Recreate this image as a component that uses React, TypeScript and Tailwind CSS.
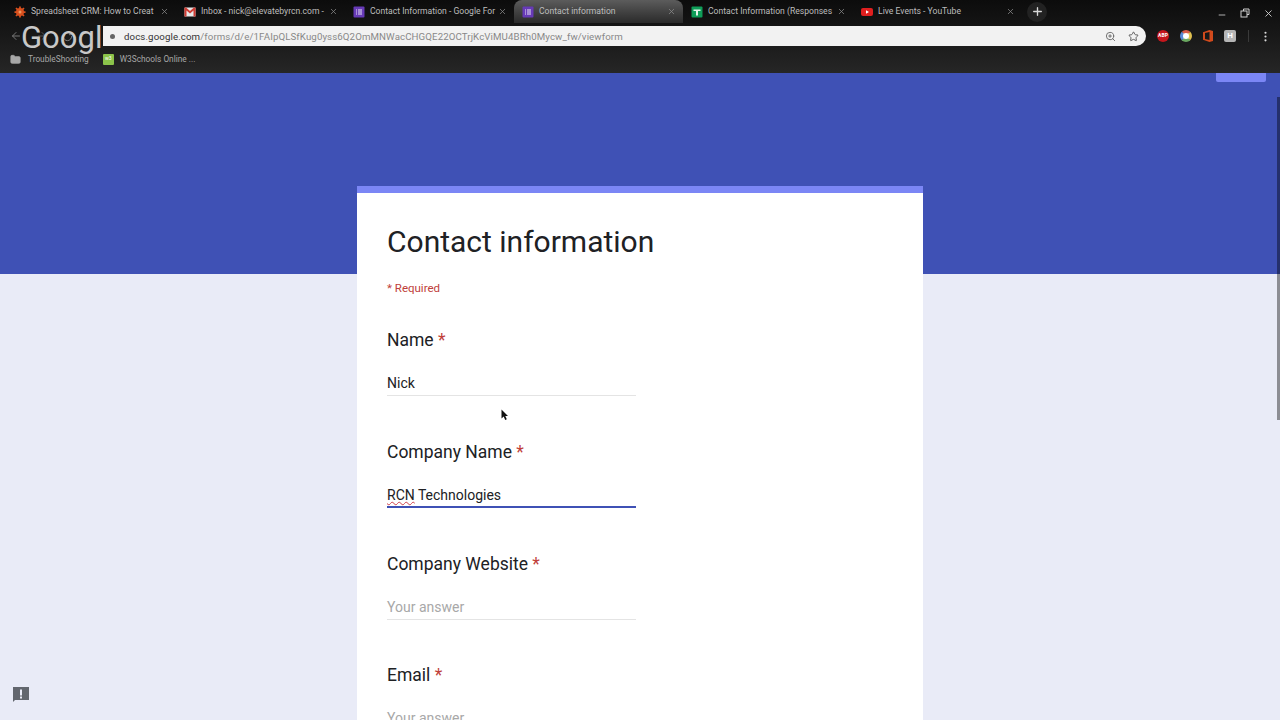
import React from 'react';
import { X, ArrowLeft, ArrowRight, RotateCw, Plus, Minus, ZoomIn, Star, EllipsisVertical, Folder } from 'lucide-react';

const roboto = { fontFamily: 'Roboto, "Liberation Sans", sans-serif' };

function Favicon({ kind }: { kind: string }) {
  if (kind === 'sun') {
    return (
      <svg width="12" height="12" viewBox="0 0 24 24" className="shrink-0">
        <circle cx="12" cy="12" r="8" fill="#d9501e" />
        <path d="M12 1v22M1 12h22M4 4l16 16M20 4L4 20" stroke="#d9501e" strokeWidth="3.5" />
        <circle cx="12" cy="12" r="3" fill="#eb9a62" />
      </svg>
    );
  }
  if (kind === 'mail') {
    return (
      <svg width="12" height="12" viewBox="0 0 24 24" className="shrink-0">
        <rect x="1" y="3" width="22" height="18" rx="1" fill="#e8e8e8" />
        <path d="M1 3v18h4V9l7 6 7-6v12h4V3h-3l-8 7-8-7z" fill="#d03b33" />
      </svg>
    );
  }
  if (kind === 'form') {
    return (
      <svg width="12" height="12" viewBox="0 0 24 24" className="shrink-0">
        <rect x="1" y="1" width="22" height="22" rx="2" fill="#673ab7" />
        <path d="M6 7h2v2H6zM10 7h8v2h-8zM6 11h2v2H6zM10 11h8v2h-8zM6 15h2v2H6zM10 15h8v2h-8z" fill="#e8e4f4" />
      </svg>
    );
  }
  if (kind === 'sheet') {
    return (
      <svg width="12" height="12" viewBox="0 0 24 24" className="shrink-0">
        <rect x="1" y="1" width="22" height="22" rx="2" fill="#0f9d58" />
        <path d="M5 7h14v3h-5v9h-4v-9H5z" fill="#e6f4ea" />
      </svg>
    );
  }
  return (
    <svg width="12" height="12" viewBox="0 0 24 24" className="shrink-0">
      <rect x="0" y="4" width="24" height="16" rx="4" fill="#e01f1f" />
      <path d="M10 8.5l6 3.5-6 3.5z" fill="#fff" />
    </svg>
  );
}

const tabs = [
  { icon: 'sun', title: 'Spreadsheet CRM: How to Creat', w: 'w-[170px]' },
  { icon: 'mail', title: 'Inbox - nick@elevatebyrcn.com -', w: 'w-[169px]' },
  { icon: 'form', title: 'Contact Information - Google For', w: 'w-[169px]' },
  { icon: 'form', title: 'Contact information', w: 'w-[169px]', active: true },
  { icon: 'sheet', title: 'Contact Information (Responses', w: 'w-[170px]' },
  { icon: 'yt', title: 'Live Events - YouTube', w: 'w-[169px]' },
];

function Tab({ icon, title, w, active }: { icon: string; title: string; w: string; active?: boolean }) {
  return (
    <div
      className={`${w} h-[23px] flex items-center pl-[8px] pr-[7px] gap-[5px] rounded-t-lg ${
        active ? 'bg-gradient-to-b from-[#5c5c5c] to-[#2b2b2b]' : ''
      }`}
    >
      <Favicon kind={icon} />
      <span className="flex-1 min-w-0 whitespace-nowrap text-[8.6px] text-[#bdbdbd]">{title}</span>
      <X className="w-[9px] h-[9px] text-[#8a8a8a] shrink-0" strokeWidth={2} />
    </div>
  );
}

function Question({ label, value, active, squiggle, mt }: { label: string; value?: string; active?: boolean; squiggle?: string; mt: string }) {
  return (
    <div className={mt}>
      <div className="text-[17.5px] leading-[19px] text-[#202124]">
        {label} <span className="text-[#c0403a]">*</span>
      </div>
      <div
        className={`mt-[23px] w-[249px] h-[23px] text-[14px] leading-[20px] ${
          active ? 'border-b-2 border-[#3f51b5]' : 'border-b border-[#e4e4e4]'
        } ${value ? 'text-[#202124]' : 'text-[#a8a8a8]'}`}
      >
        {squiggle && <span className="underline decoration-wavy decoration-[#d0404a] decoration-1">{squiggle}</span>}
        {squiggle ? ' ' : ''}
        {value ?? 'Your answer'}
      </div>
    </div>
  );
}

export default function App() {
  return (
    <div className="w-[1280px] h-[720px] overflow-hidden flex flex-col bg-[#e9ebf7]" style={roboto}>
      {/* Browser chrome */}
      <div className="h-[73px] shrink-0 flex flex-col bg-gradient-to-b from-[#0c0c0c] to-[#262626]">
        <div className="h-[23px] flex items-center pl-[6px]">
          {tabs.map((t) => (
            <Tab key={t.title} {...t} />
          ))}
          <span className="ml-[5px] w-[20px] h-[20px] rounded-full bg-[#222] flex items-center justify-center">
            <Plus className="w-[13px] h-[13px] text-[#d8d8d8]" strokeWidth={2.5} />
          </span>
          <div className="flex-1" />
          <div className="flex items-center gap-[13px] pr-[6px] pt-[3px] text-[#cfcfcf]">
            <Minus className="w-[10px] h-[10px] translate-y-[2px]" />
            <svg width="10" height="10" viewBox="0 0 10 10" fill="none" stroke="#cfcfcf" strokeWidth="1">
              <rect x="1" y="3" width="6" height="6" />
              <path d="M3.5 3V1H9v5.5H7" />
            </svg>
            <X className="w-[11px] h-[11px]" />
          </div>
        </div>
        <div className="h-[26px] flex items-center relative">
          <ArrowLeft className="w-[12px] h-[12px] text-[#777] ml-[10px]" />
          <ArrowRight className="w-[12px] h-[12px] text-[#555] ml-[14px]" />
          <RotateCw className="w-[11px] h-[11px] text-[#888] ml-[14px]" />
          {/* Google watermark lying over the toolbar */}
          <span className="absolute left-[21px] top-[-3px] text-[31px] leading-[36px] text-[#c8c8c8] w-[82px] overflow-hidden">
            Googl
          </span>
          <div className="ml-[30px] w-[1043px] h-[20px] flex items-center bg-[#f2f2f2] rounded-r-full rounded-l-lg pl-[7px] pr-[6px]">
            <span className="w-[5px] h-[5px] rounded-full bg-[#666]" />
            <span className="ml-[9px] pt-[2px] text-[9.7px] whitespace-nowrap tracking-[0.1px] text-[#888]">
              <span className="text-[#333]">docs.google.com</span>/forms/d/e/1FAIpQLSfKug0yss6Q2OmMNWacCHGQE22OCTrjKcViMU4BRh0Mycw_fw/viewform
            </span>
            <div className="flex-1" />
            <ZoomIn className="w-[11px] h-[11px] text-[#666]" />
            <Star className="w-[11px] h-[11px] text-[#555] ml-[12px] mr-[1px]" />
          </div>
          <div className="ml-[11px] flex items-center gap-[11px]">
            <span className="w-[12px] h-[12px] rounded-full bg-[#c4161c] text-white text-[5px] font-bold flex items-center justify-center">ABP</span>
            <span className="w-[12px] h-[12px] rounded-full border-[3px] border-t-[#d85c4a] border-r-[#e0c050] border-b-[#6aa860] border-l-[#5a8ad8] bg-white" />
            <svg width="10" height="12" viewBox="0 0 10 12">
              <path d="M6.5 0L0 2.2v7.6L6.5 12l3.5-1V1zM6.5 2v8L2 9V3z" fill="#d24a1c" />
            </svg>
            <span className="w-[12px] h-[12px] rounded-[2px] bg-[#b5b5b5] text-white text-[8px] font-bold flex items-center justify-center">H</span>
          </div>
          <div className="ml-[12px] w-px h-[12px] bg-[#3a3a3a]" />
          <EllipsisVertical className="w-[13px] h-[13px] text-[#d8d8d8] ml-[10px]" />
        </div>
        <div className="h-[20px] flex items-center pl-[10px] text-[8.3px] text-[#a8a8a8]">
          <Folder className="w-[11px] h-[11px] text-[#a8a8a8] fill-[#a8a8a8]" />
          <span className="ml-[7px]">TroubleShooting</span>
          <span className="ml-[14px] w-[11px] h-[11px] rounded-[1px] bg-[#8bc34a] text-white text-[5px] flex items-center justify-center">w3</span>
          <span className="ml-[6px]">W3Schools Online ...</span>
        </div>
      </div>

      {/* Page */}
      <div className="flex-1 min-h-0 relative flex flex-col">
        <div className="h-[201px] shrink-0 bg-[#3f51b5]" />
        <div className="absolute right-[14px] top-0 w-[50px] h-[9px] bg-[#7b86f5] rounded-b-[2px]" />
        {/* Scrollbar */}
        <div className="absolute right-0 top-[24px] w-[3px] h-[323px] bg-black/40" />
        <div className="absolute left-[357px] top-[113px] w-[566px] h-[560px] bg-white overflow-hidden">
          <div className="h-[7px] bg-[#7b86f5]" />
          <div className="px-[30px]">
            <div className="mt-[31px] text-[30px] leading-[36px] text-[#202124]">Contact information</div>
            <div className="mt-[20px] text-[11.5px] leading-[16px] text-[#c0403a]">* Required</div>
            <Question label="Name" value="Nick" mt="mt-[35px]" />
            <Question label="Company Name" squiggle="RCN" value="Technologies" active mt="mt-[47px]" />
            <Question label="Company Website" mt="mt-[47px]" />
            <Question label="Email" mt="mt-[46px]" />
          </div>
        </div>
        {/* Mouse pointer */}
        <svg width="8" height="12" viewBox="0 0 8 12" className="absolute left-[501px] top-[336px]">
          <path d="M0.5 0.5v9l2.2-2 1.5 3.5 1.6-.7-1.5-3.4H7z" fill="#111" />
        </svg>
        {/* Feedback button */}
        <svg width="18" height="18" viewBox="0 0 18 18" className="absolute left-[12px] top-[613px]">
          <path d="M1 1h16v13H3l-2 2z" fill="#62666e" />
          <rect x="8" y="3.5" width="2" height="6" fill="#e9ebf7" />
          <rect x="8" y="10.5" width="2" height="2" fill="#e9ebf7" />
        </svg>
      </div>
    </div>
  );
}
